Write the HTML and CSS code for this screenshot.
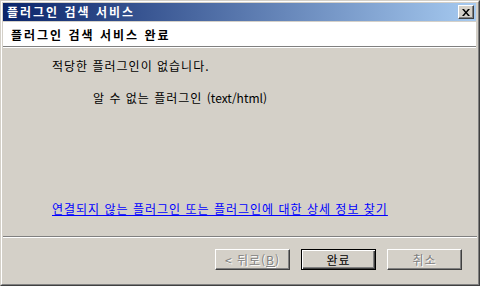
FILE: index.html
```html
<!DOCTYPE html>
<html lang="ko">
<head>
  <meta charset="UTF-8">
  <meta name="viewport" content="width=device-width, initial-scale=1.0">
  <title>플러그인 검색 서비스</title>
  <link rel="stylesheet" href="styles.css">
</head>
<body>
  <div class="window">
    <div class="window-frame">
      <div class="titlebar">
        <span class="titlebar-text">플러그인 검색 서비스</span>
        <span class="titlebar-close">
          <svg width="8" height="7" viewBox="0 0 8 7">
            <path d="M0 0h2l2 2.5 2-2.5h2l-3 3.5 3 3.5h-2l-2-2.5-2 2.5h-2l3-3.5z" fill="#000"/>
          </svg>
        </span>
      </div>
      <div class="wizard-header">플러그인 검색 서비스 완료</div>
      <div class="wizard-body">
        <p class="wizard-msg">적당한 플러그인이 없습니다.</p>
        <p class="wizard-plugin">알 수 없는 플러그인 <span class="mime">(text/html)</span></p>
        <a class="wizard-link" href="#">연결되지 않는 플러그인 또는 플러그인에 대한 상세 정보 찾기</a>
      </div>
      <div class="wizard-sep"></div>
      <div class="wizard-buttons">
        <span class="btn disabled">&lt; 뒤로(<u>B</u>)</span>
        <span class="btn default">완료</span>
        <span class="btn disabled">취소</span>
      </div>
    </div>
  </div>
</body>
</html>
```

FILE: styles.css
```css
*{
  margin: 0;
  padding: 0;
  box-sizing: border-box;
}
body{
  background: #d4d0c8;
  font: 12px "Noto Sans CJK KR", "Liberation Sans", sans-serif;
  letter-spacing: 1px;
  color: #000;
}
.window{
  width: 480px;
  height: 286px;
  border: 1px solid;
  border-color: #d4d0c8 #404040 #404040 #d4d0c8;
}
.window-frame{
  height: 100%;
  display: flex;
  flex-direction: column;
  border: 1px solid;
  border-color: #fff #808080 #808080 #fff;
  padding: 1px 2px 2px 1px;
}
.titlebar{
  height: 18px;
  display: flex;
  align-items: center;
  justify-content: space-between;
  padding: 0 2px 0 4px;
  background: linear-gradient(to right, #0a246a, #a6caf0);
}
.titlebar-text{
  color: #fff;
  font-weight: bold;
  letter-spacing: 2px;
  line-height: 14px;
}
.titlebar-close{
  width: 16px;
  height: 14px;
  display: flex;
  align-items: center;
  justify-content: center;
  background: #d4d0c8;
  border: 1px solid;
  border-color: #fff #404040 #404040 #fff;
  box-shadow: inset -1px -1px 0 #808080;
}
.wizard-header{
  margin-top: 1px;
  height: 25px;
  display: flex;
  align-items: center;
  padding-left: 8px;
  background: #fff;
  font-weight: bold;
  letter-spacing: 2px;
  border-bottom: 1px solid #808080;
  box-shadow: 0 1px 0 #fff;
}
.wizard-body{
  flex: 1;
  display: flex;
  flex-direction: column;
  padding: 11px 0 0 49px;
  line-height: 16px;
}
.wizard-plugin{
  margin: 16px 0 0 41px;
}
.mime{
  letter-spacing: 0;
}
.wizard-link{
  margin-top: auto;
  margin-bottom: 19px;
  align-self: flex-start;
  color: #00f;
}
.wizard-sep{
  height: 2px;
  border-top: 1px solid #808080;
  border-bottom: 1px solid #fff;
  margin-right: -1px;
}
.wizard-buttons{
  display: flex;
  justify-content: flex-end;
  gap: 11px;
  padding: 11px 14px 12px 0;
}
.btn{
  width: 75px;
  height: 21px;
  display: flex;
  align-items: center;
  justify-content: center;
  border: 1px solid;
  border-color: #fff #404040 #404040 #fff;
  box-shadow: inset -1px -1px 0 #808080;
}
.btn.default{
  border-color: #000;
  box-shadow: inset 1px 1px 0 #fff, inset -1px -1px 0 #404040, inset -2px -2px 0 #808080;
}
.btn.disabled{
  color: #808080;
  text-shadow: 1px 1px 0 #fff;
}
```
